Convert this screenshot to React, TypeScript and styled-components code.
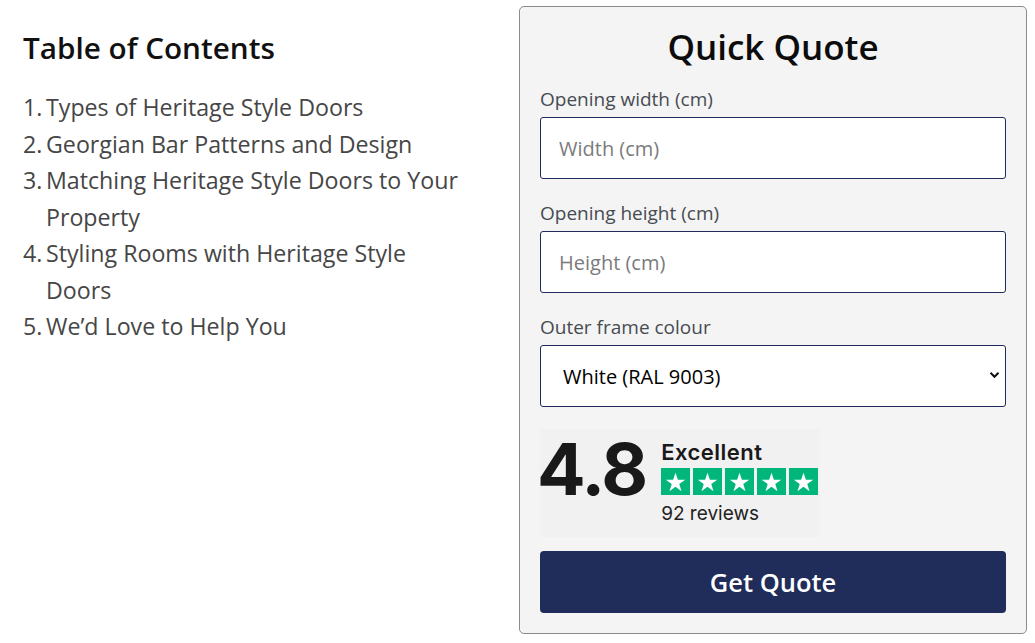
import React from 'react';
import styled, { createGlobalStyle } from 'styled-components';

const GlobalStyle = createGlobalStyle`
  body {
    margin: 0;
    background: #ffffff;
    font-family: 'Open Sans', 'Noto Sans', sans-serif;
  }
`;

const Page = styled.div`
  display: flex;
  justify-content: space-between;
  align-items: flex-start;
  padding: 6px 8px 8px 23px;
`;

const Contents = styled.nav`
  width: 440px;
  padding-top: 22px;
`;

const ContentsTitle = styled.h2`
  margin: 0 0 21px;
  font-size: 29.7px;
  line-height: 40px;
  font-weight: 600;
  color: #111;
`;

const ContentsList = styled.ol`
  margin: 0;
  padding: 0;
  list-style: none;
`;

const ContentsItem = styled.li`
  display: flex;
  font-size: 23.2px;
  line-height: 36.5px;
  color: #464646;
`;

const ItemNumber = styled.span`
  flex: 0 0 23px;
`;

const QuotePanel = styled.form`
  width: 466px;
  padding: 17px 20px 20px;
  background: #f4f4f4;
  border: 1px solid #8c8c8c;
  border-radius: 5px;
`;

const QuoteTitle = styled.h2`
  margin: 0 0 16px;
  text-align: center;
  font-size: 35px;
  line-height: 46px;
  font-weight: 600;
  color: #0c0c0c;
`;

const Field = styled.label<{ $gap?: number }>`
  display: block;
  margin-top: ${({ $gap }) => $gap ?? 0}px;
`;

const FieldLabel = styled.span`
  display: block;
  margin-bottom: 4px;
  font-size: 19px;
  line-height: 27px;
  color: #474b52;
`;

const TextInput = styled.input`
  box-sizing: border-box;
  display: block;
  width: 100%;
  height: 62px;
  padding: 0 18px;
  border: 1px solid #202a5c;
  border-radius: 3px;
  background: #fff;
  font-family: inherit;
  font-size: 20px;
  color: #222;

  &::placeholder {
    color: #7b7b7b;
  }
`;

const SelectWrap = styled.div`
  position: relative;
`;

const Select = styled.select`
  box-sizing: border-box;
  display: block;
  width: 100%;
  height: 62px;
  padding: 0 22px;
  appearance: none;
  border: 1px solid #202a5c;
  border-radius: 3px;
  background: #fff;
  font-family: inherit;
  font-size: 20px;
  color: #000;
`;

const Chevron = styled.svg`
  position: absolute;
  right: 6px;
  top: 26px;
  width: 11px;
  height: 8px;
  pointer-events: none;
`;

const RatingCard = styled.div`
  display: flex;
  align-items: flex-start;
  gap: 15px;
  width: 280px;
  height: 108px;
  margin: 22px 0 14px;
  padding: 11px 0 0;
  box-sizing: border-box;
  background: #f1f1f1;
  font-family: Inter, 'Liberation Sans', sans-serif;
  color: #191919;
`;

const Score = styled.span`
  margin: -7px 0 0 -3px;
  font-size: 72px;
  line-height: 1;
  font-weight: 700;
  letter-spacing: -2px;
`;

const RatingDetails = styled.div`
  display: flex;
  flex-direction: column;
`;

const RatingWord = styled.span`
  font-size: 22px;
  line-height: 24px;
  font-weight: 600;
  letter-spacing: 0.5px;
`;

const Stars = styled.div`
  display: flex;
  gap: 3px;
  margin: 4px 0 8px;
`;

const StarTile = styled.span`
  display: flex;
  align-items: center;
  justify-content: center;
  width: 29px;
  height: 27px;
  background: #00b67a;
`;

const ReviewCount = styled.span`
  font-size: 19px;
  line-height: 22px;
  color: #222;
`;

const SubmitButton = styled.button`
  display: block;
  width: 100%;
  height: 62px;
  border: none;
  border-radius: 4px;
  background: #202c5a;
  color: #fff;
  font-family: inherit;
  font-size: 25.5px;
  font-weight: 600;
  cursor: pointer;
`;

const contents = [
  'Types of Heritage Style Doors',
  'Georgian Bar Patterns and Design',
  'Matching Heritage Style Doors to Your Property',
  'Styling Rooms with Heritage Style Doors',
  'We\u2019d Love to Help You',
];

const Star = () => (
  <svg width="21" height="20" viewBox="0 0 24 23">
    <path
      d="M12 0.8l2.75 8.1h8.45l-6.85 4.95 2.6 8.15L12 17l-6.95 5 2.6-8.15L0.8 8.9h8.45z"
      fill="#fff"
    />
  </svg>
);

const App: React.FC = () => (
  <>
    <GlobalStyle />
    <Page>
      <Contents>
        <ContentsTitle>Table of Contents</ContentsTitle>
        <ContentsList>
          {contents.map((item, i) => (
            <ContentsItem key={item}>
              <ItemNumber>{i + 1}.</ItemNumber>
              <span>{item}</span>
            </ContentsItem>
          ))}
        </ContentsList>
      </Contents>

      <QuotePanel onSubmit={e => e.preventDefault()}>
        <QuoteTitle>Quick Quote</QuoteTitle>

        <Field>
          <FieldLabel>Opening width (cm)</FieldLabel>
          <TextInput placeholder="Width (cm)" />
        </Field>

        <Field $gap={21}>
          <FieldLabel>Opening height (cm)</FieldLabel>
          <TextInput placeholder="Height (cm)" />
        </Field>

        <Field $gap={21}>
          <FieldLabel>Outer frame colour</FieldLabel>
          <SelectWrap>
            <Select defaultValue="9003">
              <option value="9003">White (RAL 9003)</option>
              <option value="7016">Anthracite Grey (RAL 7016)</option>
              <option value="9005">Black (RAL 9005)</option>
            </Select>
            <Chevron viewBox="0 0 11 8">
              <path d="M1.5 1.8l4 4 4-4" fill="none" stroke="#111" strokeWidth="2" />
            </Chevron>
          </SelectWrap>
        </Field>

        <RatingCard>
          <Score>4.8</Score>
          <RatingDetails>
            <RatingWord>Excellent</RatingWord>
            <Stars>
              {[0, 1, 2, 3, 4].map(n => (
                <StarTile key={n}>
                  <Star />
                </StarTile>
              ))}
            </Stars>
            <ReviewCount>92 reviews</ReviewCount>
          </RatingDetails>
        </RatingCard>

        <SubmitButton type="submit">Get Quote</SubmitButton>
      </QuotePanel>
    </Page>
  </>
);

export default App;
